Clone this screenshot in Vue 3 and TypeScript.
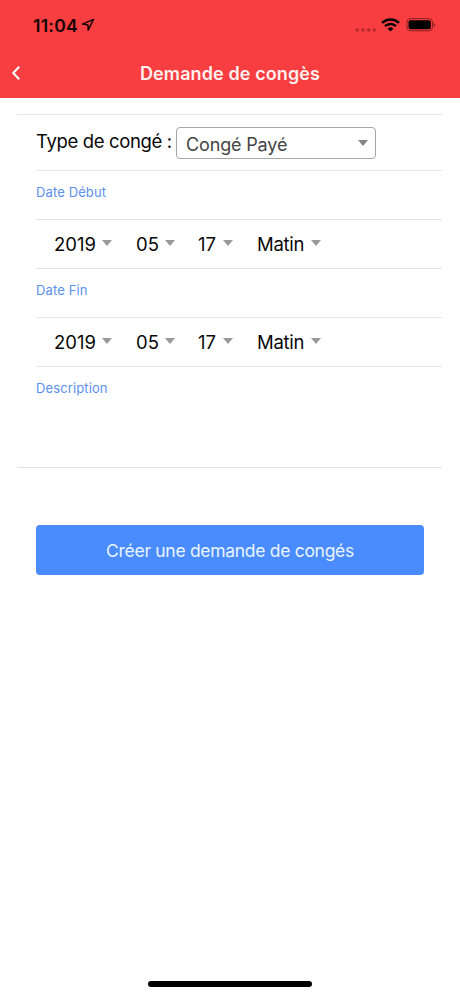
<script setup lang="ts">
import { ref } from 'vue'

interface DateGroup {
  label: string
  year: string
  month: string
  day: string
  period: string
}

const leaveType = ref<string>('Congé Payé')
const groups = ref<DateGroup[]>([
  { label: 'Date Début', year: '2019', month: '05', day: '17', period: 'Matin' },
  { label: 'Date Fin', year: '2019', month: '05', day: '17', period: 'Matin' },
])
</script>

<template>
  <div class="screen">
    <header class="header">
      <div class="status">
        <span class="time">11:04</span>
        <svg class="location" width="14" height="14" viewBox="0 0 14 14">
          <path d="M12.5 1.4 1.6 6.1 7 7 7.2 12.2Z" fill="none" stroke="#160404" stroke-width="1.5" stroke-linejoin="round" />
        </svg>
        <svg class="dots" width="22" height="6" viewBox="0 0 22 6">
          <g fill="#b52c2e">
            <circle cx="2.2" cy="3" r="1.8" />
            <circle cx="8" cy="3" r="1.8" />
            <circle cx="13.7" cy="3" r="1.8" />
            <circle cx="19.3" cy="3" r="1.8" />
          </g>
        </svg>
        <svg class="wifi" width="19" height="14" viewBox="0 0 19 14">
          <g fill="none" stroke="#000" stroke-width="2.5">
            <path d="M1 4.9a12.2 12.2 0 0 1 17 0" />
            <path d="M4 8.2a7.8 7.8 0 0 1 11 0" />
          </g>
          <path d="M9.5 13.6 6.6 10.7a4.1 4.1 0 0 1 5.8 0Z" fill="#000" />
        </svg>
        <svg class="battery" width="30" height="14" viewBox="0 0 30 14">
          <rect x="0.9" y="0.6" width="25.6" height="12.2" rx="3.6" fill="none" stroke="#8b2022" stroke-width="1" />
          <rect x="2.5" y="2.2" width="22.4" height="9" rx="2.1" fill="#000" />
          <path d="M27.6 4.8c2.2.8 2.2 3.4 0 4.2Z" fill="#8b2022" />
        </svg>
      </div>
      <div class="toolbar">
        <svg class="back" width="10" height="14" viewBox="0 0 10 14">
          <path d="M8.2.8 2.2 7l6 6.2" fill="none" stroke="#fff" stroke-width="2.1" />
        </svg>
        <h1 class="title">Demande de congès</h1>
      </div>
    </header>

    <main class="form">
      <section class="list">
        <div class="row type-row">
          <span class="type-label">Type de congé :</span>
          <div class="select">
            <span class="select-value">{{ leaveType }}</span>
            <i class="caret"></i>
          </div>
        </div>
        <template v-for="group in groups" :key="group.label">
          <div class="row label-row"><span class="label">{{ group.label }}</span></div>
          <div class="row date-row">
            <div class="picker year"><span>{{ group.year }}</span><i class="caret"></i></div>
            <div class="picker month"><span>{{ group.month }}</span><i class="caret"></i></div>
            <div class="picker day"><span>{{ group.day }}</span><i class="caret"></i></div>
            <div class="picker period"><span>{{ group.period }}</span><i class="caret"></i></div>
          </div>
        </template>
        <div class="row description-row"><span class="label">Description</span></div>
      </section>
      <button class="submit" type="button">Créer une demande de congés</button>
    </main>

    <div class="home-indicator"></div>
  </div>
</template>

<style>
body {
  margin: 0;
  background: #fff;
}
</style>

<style scoped>
.screen {
  display: flex;
  flex-direction: column;
  width: 460px;
  height: 996px;
  overflow: hidden;
  background: #fff;
  color: #080808;
  font-family: Inter, "Liberation Sans", sans-serif;
}
.header {
  height: 98px;
  background: #f83e40;
}
.status {
  display: flex;
  align-items: center;
  height: 49px;
  padding: 2px 24px 0 33px;
  box-sizing: border-box;
}
.time {
  color: #160404;
  font-size: 17.5px;
  font-weight: 600;
  line-height: 20px;
  letter-spacing: 0.25px;
}
.location {
  margin: 0 0 1px 3px;
}
.dots {
  margin: 9px 4px 0 auto;
}
.wifi {
  margin: 0 6px 2px 0;
}
.battery {
  margin-bottom: 1px;
}
.toolbar {
  display: grid;
  grid-template-columns: 30px 1fr 30px;
  align-items: center;
  height: 49px;
}
.back {
  margin: 0 0 1px 11px;
}
.title {
  margin: 0;
  color: #fff1ef;
  font-size: 18px;
  font-weight: 600;
  line-height: 24px;
  letter-spacing: 0.1px;
  text-align: center;
}
.form {
  flex: 1;
  padding: 16px 18px 0 17px;
}
.list {
  border-top: 1px solid #e8e8e9;
  border-bottom: 1px solid #e3e3e4;
}
.row {
  display: flex;
  height: 49px;
  margin-left: 19px;
  border-top: 1px solid #e6e6e7;
  box-sizing: border-box;
}
.type-row {
  height: 55px;
  padding-top: 12px;
  border-top: 0;
}
.type-label {
  width: 140px;
  font-size: 18.5px;
  line-height: 28px;
  letter-spacing: -0.35px;
  white-space: nowrap;
}
.select {
  display: flex;
  align-items: center;
  justify-content: space-between;
  width: 200px;
  height: 32px;
  padding: 2px 7px 0 9px;
  border: 1px solid #a6a6a6;
  border-radius: 4px;
  box-sizing: border-box;
  color: #454545;
  font-size: 18px;
  line-height: 28px;
  letter-spacing: -0.15px;
}
.select-value {
  padding-top: 1px;
}
.caret {
  width: 0;
  height: 0;
  border: 5px solid transparent;
  border-top: 6px solid #999;
  border-bottom: 0;
}
.select .caret {
  margin-bottom: 2px;
  border-top-color: #858585;
}
.label-row,
.description-row {
  padding-top: 11px;
}
.label {
  color: #5b90ee;
  font-size: 13px;
  line-height: 20px;
  letter-spacing: 0.12px;
}
.date-row {
  align-items: center;
  padding-left: 18px;
}
.picker {
  display: flex;
  align-items: center;
  justify-content: space-between;
  height: 24px;
  font-size: 18.5px;
  line-height: 24px;
}
.picker .caret {
  margin-bottom: 3px;
}
.year {
  width: 58px;
}
.month {
  width: 39px;
  margin-left: 24px;
}
.day {
  width: 35px;
  margin-left: 23px;
}
.period {
  width: 64px;
  margin-left: 24px;
  letter-spacing: -0.3px;
}
.description-row {
  height: 101px;
}
.submit {
  display: block;
  width: 388px;
  height: 50px;
  margin: 57px 0 0 19px;
  padding: 1px 0 0;
  border: 0;
  border-radius: 4px;
  background: #4a8bfe;
  color: #e7f5ff;
  font-family: inherit;
  font-size: 17.5px;
  line-height: 24px;
  letter-spacing: -0.3px;
}
.home-indicator {
  width: 164px;
  height: 6px;
  margin: 0 auto 9px;
  border-radius: 3px;
  background: #000;
}
</style>
